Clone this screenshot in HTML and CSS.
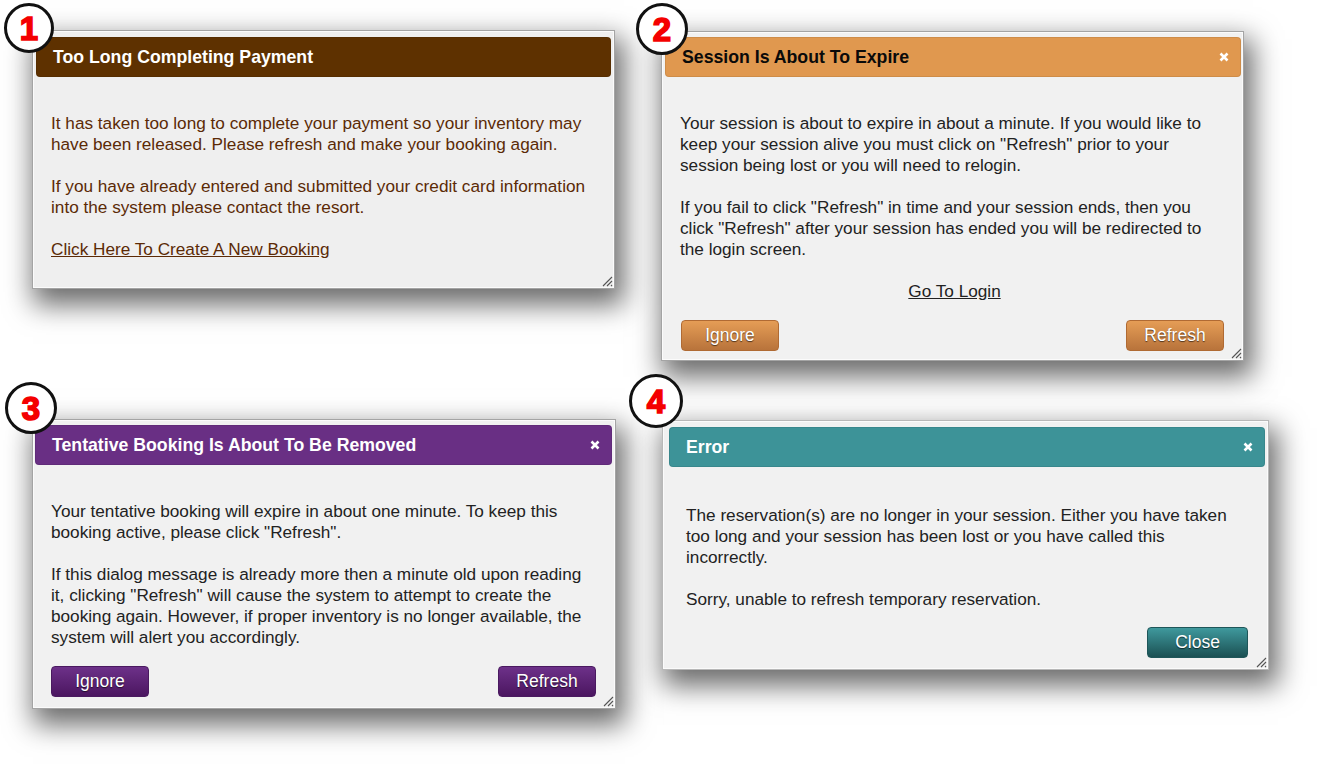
FILE: index.html
```html
<!DOCTYPE html>
<html lang="en">
<head>
<meta charset="utf-8">
<title>Dialog messages</title>
<link rel="stylesheet" href="styles.css">
</head>
<body>
<div class="canvas">

  <section class="shot shot-1">
    <header class="titlebar titlebar-brown">
      <span class="title">Too Long Completing Payment</span>
    </header>
    <div class="content content-brown">
      <p>It has taken too long to complete your payment so your inventory may<br>have been released. Please refresh and make your booking again.</p>
      <p>If you have already entered and submitted your credit card information<br>into the system please contact the resort.</p>
      <p><a class="link" href="#">Click Here To Create A New Booking</a></p>
    </div>
    <span class="grip"><svg width="12" height="12" viewBox="0 0 12 12"><path d="M11 2 L2 11 M11 6 L6 11 M11 10 L10 11" stroke="#555" stroke-width="1.1" fill="none"/></svg></span>
  </section>

  <section class="shot shot-2">
    <header class="titlebar titlebar-orange">
      <span class="title">Session Is About To Expire</span>
      <span class="close"><svg width="10" height="10" viewBox="0 0 10 10"><path d="M1.5 1.5 L8.5 8.5 M8.5 1.5 L1.5 8.5" stroke="#fff" stroke-width="2.6" fill="none"/></svg></span>
    </header>
    <div class="content">
      <p>Your session is about to expire in about a minute. If you would like to<br>keep your session alive you must click on "Refresh" prior to your<br>session being lost or you will need to relogin.</p>
      <p>If you fail to click "Refresh" in time and your session ends, then you<br>click "Refresh" after your session has ended you will be redirected to<br>the login screen.</p>
      <p class="center"><a class="link" href="#">Go To Login</a></p>
    </div>
    <footer class="buttons">
      <button class="btn btn-orange">Ignore</button>
      <button class="btn btn-orange">Refresh</button>
    </footer>
    <span class="grip"><svg width="12" height="12" viewBox="0 0 12 12"><path d="M11 2 L2 11 M11 6 L6 11 M11 10 L10 11" stroke="#555" stroke-width="1.1" fill="none"/></svg></span>
  </section>

  <section class="shot shot-3">
    <header class="titlebar titlebar-purple">
      <span class="title">Tentative Booking Is About To Be Removed</span>
      <span class="close"><svg width="10" height="10" viewBox="0 0 10 10"><path d="M1.5 1.5 L8.5 8.5 M8.5 1.5 L1.5 8.5" stroke="#fff" stroke-width="2.6" fill="none"/></svg></span>
    </header>
    <div class="content">
      <p>Your tentative booking will expire in about one minute. To keep this<br>booking active, please click "Refresh".</p>
      <p>If this dialog message is already more then a minute old upon reading<br>it, clicking "Refresh" will cause the system to attempt to create the<br>booking again. However, if proper inventory is no longer available, the<br>system will alert you accordingly.</p>
    </div>
    <footer class="buttons">
      <button class="btn btn-purple">Ignore</button>
      <button class="btn btn-purple">Refresh</button>
    </footer>
    <span class="grip"><svg width="12" height="12" viewBox="0 0 12 12"><path d="M11 2 L2 11 M11 6 L6 11 M11 10 L10 11" stroke="#555" stroke-width="1.1" fill="none"/></svg></span>
  </section>

  <section class="shot shot-4">
    <header class="titlebar titlebar-teal">
      <span class="title">Error</span>
      <span class="close"><svg width="10" height="10" viewBox="0 0 10 10"><path d="M1.5 1.5 L8.5 8.5 M8.5 1.5 L1.5 8.5" stroke="#fff" stroke-width="2.6" fill="none"/></svg></span>
    </header>
    <div class="content">
      <p>The reservation(s) are no longer in your session. Either you have taken<br>too long and your session has been lost or you have called this<br>incorrectly.</p>
      <p>Sorry, unable to refresh temporary reservation.</p>
    </div>
    <footer class="buttons buttons-end">
      <button class="btn btn-teal btn-wide">Close</button>
    </footer>
    <span class="grip"><svg width="12" height="12" viewBox="0 0 12 12"><path d="M11 2 L2 11 M11 6 L6 11 M11 10 L10 11" stroke="#555" stroke-width="1.1" fill="none"/></svg></span>
  </section>

  <div class="badge badge-1">1</div>
  <div class="badge badge-2">2</div>
  <div class="badge badge-3">3</div>
  <div class="badge badge-4">4</div>
</div>
</body>
</html>
```

FILE: styles.css
```css
* { box-sizing: border-box; }

html, body {
  margin: 0;
  padding: 0;
  background: #ffffff;
}

body {
  font-family: "Liberation Sans", Arial, sans-serif;
  color: #222;
}

.canvas {
  position: relative;
  width: 1329px;
  height: 769px;
  overflow: hidden;
  background: #fff;
}

/* each screenshot "window" sits at its own spot on the free canvas */
.shot {
  position: absolute;
  display: flex;
  flex-direction: column;
  background: #f1f1f1;
  border: 1px solid #a4a4a4;
  box-shadow: inset 0 0 0 1px #fbfbfb, 5px 12px 26px 4px rgba(0, 0, 0, 0.58);
  padding: 4px 3px 0 3px;
}

.shot-1 { left: 32px; top: 30px; width: 583px; height: 259px; background: #efefef; padding-top: 6px; }
.shot-2 { left: 661px; top: 31px; width: 583px; height: 330px; padding-top: 5px; padding-right: 2px; }
.shot-3 { left: 32px; top: 419px; width: 584px; height: 290px; padding-left: 2px; padding-top: 5px; }
.shot-4 { left: 662px; top: 420px; width: 607px; height: 250px; padding: 6px 3px 0 6px; border-color: #b8b8b8; }

.titlebar {
  flex: none;
  height: 40px;
  display: flex;
  align-items: center;
  justify-content: space-between;
  padding: 0 11px 0 16px;
  border-radius: 4px;
  border: 1px solid rgba(0, 0, 0, 0.08);
}

.title {
  font-weight: bold;
  font-size: 17.7px;
  color: #fff;
  white-space: nowrap;
}

.titlebar-brown { background: #5e3100; }
.titlebar-orange { background: #e0984f; }
.titlebar-orange .title { color: #0a0a0a; }
.titlebar-purple { background: #692f84; }
.titlebar-teal { background: #3d9398; }

.close {
  display: flex;
  width: 10px;
  height: 10px;
}

.content {
  flex: 1;
  padding: 36px 12px 0 15px;
  font-size: 17.2px;
  line-height: 21px;
  color: #222;
}

.shot-2 .content { padding-top: 36px; }
.shot-3 .content { padding-left: 16px; padding-top: 36px; }
.shot-4 .content { padding-top: 38px; padding-left: 17px; }

.content p {
  margin: 0 0 21px 0;
  white-space: nowrap;
}

.content p:last-child { margin-bottom: 0; }

.content-brown { color: #5b2a06; }

.center { text-align: center; }

.link {
  color: inherit;
  text-decoration: underline;
}

.buttons {
  flex: none;
  display: flex;
  justify-content: space-between;
  padding: 0 17px 9px 16px;
}

.shot-3 .buttons { padding: 0 16px 11px 16px; }

.buttons-end {
  justify-content: flex-end;
  padding: 0 17px 11px 16px;
}

.btn {
  width: 98px;
  height: 31px;
  border-radius: 4px;
  font-family: "Liberation Sans", Arial, sans-serif;
  font-size: 17.5px;
  color: #fff;
  text-shadow: 0 1px 1px rgba(0, 0, 0, 0.6);
  cursor: pointer;
  padding: 0;
}

.btn-wide { width: 101px; }

.btn-orange {
  background: linear-gradient(#e59d56, #b8733b);
  border: 1px solid #b06a33;
}

.btn-purple {
  background: linear-gradient(#6d3189, #4b1660);
  border: 1px solid #4a1a60;
}

.btn-teal {
  background: linear-gradient(#3f999d, #1b5053);
  border: 1px solid #1f5659;
}

.grip {
  position: absolute;
  right: 1px;
  bottom: 1px;
  display: flex;
  width: 12px;
  height: 12px;
}

.badge {
  position: absolute;
  width: 50px;
  height: 50px;
  border-radius: 50%;
  border: 3.5px solid #111;
  background: #fff;
  display: flex;
  align-items: center;
  justify-content: center;
  font-family: "Liberation Sans", Arial, sans-serif;
  font-weight: bold;
  font-size: 33px;
  color: #f40000;
  -webkit-text-stroke: 1.6px #f40000;
  line-height: 1;
  padding-top: 1px;
}

.badge-1 { left: 4px; top: 3px; }
.badge-2 { left: 636px; top: 3px; width: 52px; height: 52px; }
.badge-3 { left: 5px; top: 382px; width: 52px; height: 52px; }
.badge-4 { left: 629px; top: 374px; width: 54px; height: 54px; }
```
